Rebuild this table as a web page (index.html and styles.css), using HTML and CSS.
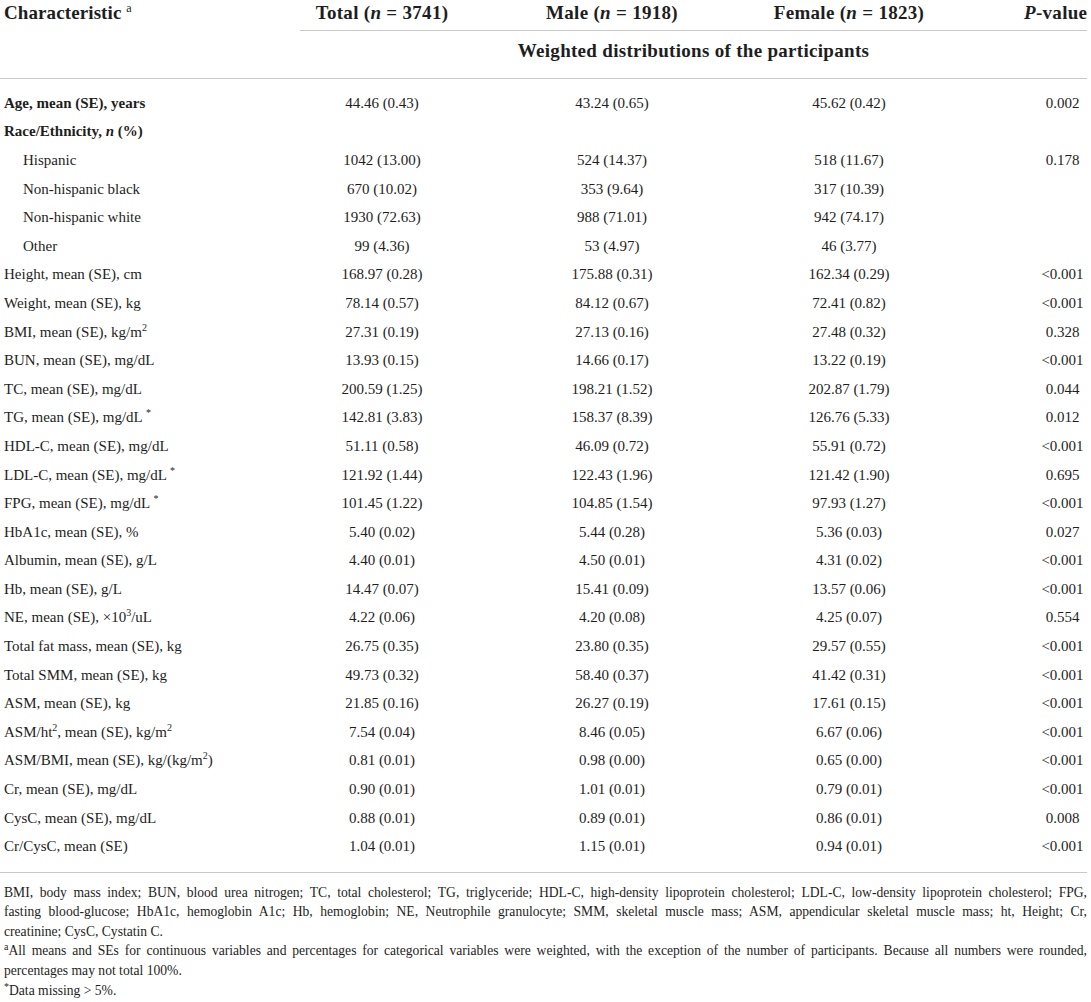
FILE: index.html
```html
<!DOCTYPE html>
<html lang="en">
<head>
<meta charset="utf-8">
<title>Table</title>
<link rel="stylesheet" href="styles.css">
</head>
<body>
<div class="table">
  <div class="row head">
    <div class="cell label">Characteristic <sup class="fn">a</sup></div>
    <div class="cell c-total">Total (<i>n</i> = 3741)</div>
    <div class="cell c-male">Male (<i>n</i> = 1918)</div>
    <div class="cell c-female">Female (<i>n</i> = 1823)</div>
    <div class="cell c-p head-p"><i>P</i>-value</div>
  </div>
  <div class="row subhead">
    <div class="cell"></div>
    <div class="cell span">Weighted distributions of the participants</div>
  </div>
  <div class="body">
    <div class="row"><div class="cell label strong">Age, mean (SE), years</div><div class="cell c-total">44.46 (0.43)</div><div class="cell c-male">43.24 (0.65)</div><div class="cell c-female">45.62 (0.42)</div><div class="cell c-p">0.002</div></div>
    <div class="row"><div class="cell label strong">Race/Ethnicity, <i>n</i> (%)</div><div class="cell c-total"></div><div class="cell c-male"></div><div class="cell c-female"></div><div class="cell c-p"></div></div>
    <div class="row"><div class="cell label sub">Hispanic</div><div class="cell c-total">1042 (13.00)</div><div class="cell c-male">524 (14.37)</div><div class="cell c-female">518 (11.67)</div><div class="cell c-p">0.178</div></div>
    <div class="row"><div class="cell label sub">Non-hispanic black</div><div class="cell c-total">670 (10.02)</div><div class="cell c-male">353 (9.64)</div><div class="cell c-female">317 (10.39)</div><div class="cell c-p"></div></div>
    <div class="row"><div class="cell label sub">Non-hispanic white</div><div class="cell c-total">1930 (72.63)</div><div class="cell c-male">988 (71.01)</div><div class="cell c-female">942 (74.17)</div><div class="cell c-p"></div></div>
    <div class="row"><div class="cell label sub">Other</div><div class="cell c-total">99 (4.36)</div><div class="cell c-male">53 (4.97)</div><div class="cell c-female">46 (3.77)</div><div class="cell c-p"></div></div>
    <div class="row"><div class="cell label">Height, mean (SE), cm</div><div class="cell c-total">168.97 (0.28)</div><div class="cell c-male">175.88 (0.31)</div><div class="cell c-female">162.34 (0.29)</div><div class="cell c-p">&lt;0.001</div></div>
    <div class="row"><div class="cell label">Weight, mean (SE), kg</div><div class="cell c-total">78.14 (0.57)</div><div class="cell c-male">84.12 (0.67)</div><div class="cell c-female">72.41 (0.82)</div><div class="cell c-p">&lt;0.001</div></div>
    <div class="row"><div class="cell label">BMI, mean (SE), kg/m<sup>2</sup></div><div class="cell c-total">27.31 (0.19)</div><div class="cell c-male">27.13 (0.16)</div><div class="cell c-female">27.48 (0.32)</div><div class="cell c-p">0.328</div></div>
    <div class="row"><div class="cell label">BUN, mean (SE), mg/dL</div><div class="cell c-total">13.93 (0.15)</div><div class="cell c-male">14.66 (0.17)</div><div class="cell c-female">13.22 (0.19)</div><div class="cell c-p">&lt;0.001</div></div>
    <div class="row"><div class="cell label">TC, mean (SE), mg/dL</div><div class="cell c-total">200.59 (1.25)</div><div class="cell c-male">198.21 (1.52)</div><div class="cell c-female">202.87 (1.79)</div><div class="cell c-p">0.044</div></div>
    <div class="row"><div class="cell label">TG, mean (SE), mg/dL <sup>*</sup></div><div class="cell c-total">142.81 (3.83)</div><div class="cell c-male">158.37 (8.39)</div><div class="cell c-female">126.76 (5.33)</div><div class="cell c-p">0.012</div></div>
    <div class="row"><div class="cell label">HDL-C, mean (SE), mg/dL</div><div class="cell c-total">51.11 (0.58)</div><div class="cell c-male">46.09 (0.72)</div><div class="cell c-female">55.91 (0.72)</div><div class="cell c-p">&lt;0.001</div></div>
    <div class="row"><div class="cell label">LDL-C, mean (SE), mg/dL <sup>*</sup></div><div class="cell c-total">121.92 (1.44)</div><div class="cell c-male">122.43 (1.96)</div><div class="cell c-female">121.42 (1.90)</div><div class="cell c-p">0.695</div></div>
    <div class="row"><div class="cell label">FPG, mean (SE), mg/dL <sup>*</sup></div><div class="cell c-total">101.45 (1.22)</div><div class="cell c-male">104.85 (1.54)</div><div class="cell c-female">97.93 (1.27)</div><div class="cell c-p">&lt;0.001</div></div>
    <div class="row"><div class="cell label">HbA1c, mean (SE), %</div><div class="cell c-total">5.40 (0.02)</div><div class="cell c-male">5.44 (0.28)</div><div class="cell c-female">5.36 (0.03)</div><div class="cell c-p">0.027</div></div>
    <div class="row"><div class="cell label">Albumin, mean (SE), g/L</div><div class="cell c-total">4.40 (0.01)</div><div class="cell c-male">4.50 (0.01)</div><div class="cell c-female">4.31 (0.02)</div><div class="cell c-p">&lt;0.001</div></div>
    <div class="row"><div class="cell label">Hb, mean (SE), g/L</div><div class="cell c-total">14.47 (0.07)</div><div class="cell c-male">15.41 (0.09)</div><div class="cell c-female">13.57 (0.06)</div><div class="cell c-p">&lt;0.001</div></div>
    <div class="row"><div class="cell label">NE, mean (SE), &times;10<sup>3</sup>/uL</div><div class="cell c-total">4.22 (0.06)</div><div class="cell c-male">4.20 (0.08)</div><div class="cell c-female">4.25 (0.07)</div><div class="cell c-p">0.554</div></div>
    <div class="row"><div class="cell label">Total fat mass, mean (SE), kg</div><div class="cell c-total">26.75 (0.35)</div><div class="cell c-male">23.80 (0.35)</div><div class="cell c-female">29.57 (0.55)</div><div class="cell c-p">&lt;0.001</div></div>
    <div class="row"><div class="cell label">Total SMM, mean (SE), kg</div><div class="cell c-total">49.73 (0.32)</div><div class="cell c-male">58.40 (0.37)</div><div class="cell c-female">41.42 (0.31)</div><div class="cell c-p">&lt;0.001</div></div>
    <div class="row"><div class="cell label">ASM, mean (SE), kg</div><div class="cell c-total">21.85 (0.16)</div><div class="cell c-male">26.27 (0.19)</div><div class="cell c-female">17.61 (0.15)</div><div class="cell c-p">&lt;0.001</div></div>
    <div class="row"><div class="cell label">ASM/ht<sup>2</sup>, mean (SE), kg/m<sup>2</sup></div><div class="cell c-total">7.54 (0.04)</div><div class="cell c-male">8.46 (0.05)</div><div class="cell c-female">6.67 (0.06)</div><div class="cell c-p">&lt;0.001</div></div>
    <div class="row"><div class="cell label">ASM/BMI, mean (SE), kg/(kg/m<sup>2</sup>)</div><div class="cell c-total">0.81 (0.01)</div><div class="cell c-male">0.98 (0.00)</div><div class="cell c-female">0.65 (0.00)</div><div class="cell c-p">&lt;0.001</div></div>
    <div class="row"><div class="cell label">Cr, mean (SE), mg/dL</div><div class="cell c-total">0.90 (0.01)</div><div class="cell c-male">1.01 (0.01)</div><div class="cell c-female">0.79 (0.01)</div><div class="cell c-p">&lt;0.001</div></div>
    <div class="row"><div class="cell label">CysC, mean (SE), mg/dL</div><div class="cell c-total">0.88 (0.01)</div><div class="cell c-male">0.89 (0.01)</div><div class="cell c-female">0.86 (0.01)</div><div class="cell c-p">0.008</div></div>
    <div class="row"><div class="cell label">Cr/CysC, mean (SE)</div><div class="cell c-total">1.04 (0.01)</div><div class="cell c-male">1.15 (0.01)</div><div class="cell c-female">0.94 (0.01)</div><div class="cell c-p">&lt;0.001</div></div>
  </div>
  <div class="notes">
    <p class="note"><span class="jline">BMI, body mass index; BUN, blood urea nitrogen; TC, total cholesterol; TG, triglyceride; HDL-C, high-density lipoprotein cholesterol; LDL-C, low-density lipoprotein cholesterol; FPG,</span><span class="jline">fasting blood-glucose; HbA1c, hemoglobin A1c; Hb, hemoglobin; NE, Neutrophile granulocyte; SMM, skeletal muscle mass; ASM, appendicular skeletal muscle mass; ht, Height; Cr,</span><span class="line">creatinine; CysC, Cystatin C.</span></p>
    <p class="note"><span class="jline"><sup>a</sup>All means and SEs for continuous variables and percentages for categorical variables were weighted, with the exception of the number of participants. Because all numbers were rounded,</span><span class="line">percentages may not total 100%.</span></p>
    <p class="note"><span class="line"><sup>*</sup>Data missing &gt; 5%.</span></p>
  </div>
</div>
</body>
</html>
```

FILE: styles.css
```css
html, body {
  margin: 0;
  padding: 0;
  background: #ffffff;
}

body {
  font-family: "Liberation Serif", "Times New Roman", serif;
  color: #1e1e1e;
}

.table {
  width: 1087px;
}

.row {
  display: grid;
  grid-template-columns: 300px 164px 296px 178px 149px;
  align-items: center;
  height: 28.6px;
  font-size: 15px;
  line-height: 18px;
}

.cell {
  white-space: nowrap;
  text-align: center;
}

.cell.label {
  text-align: left;
  padding-left: 4px;
}

.cell.label.sub {
  padding-left: 23px;
}

.strong {
  font-weight: bold;
}

.c-p {
  padding-left: 100px;
}

.head {
  height: 30px;
  font-size: 19px;
  letter-spacing: 0.3px;
  font-weight: bold;
  align-items: start;
  padding-top: 4px;
  box-sizing: border-box;
}

.head .label {
  padding-left: 4px;
  letter-spacing: 0.1px;
}

.head .c-p.head-p {
  padding-left: 86px;
}

.fn {
  font-weight: normal;
  font-size: 12px;
  vertical-align: 7px;
  line-height: 0;
}

.subhead {
  height: auto;
  font-size: 19px;
  letter-spacing: 0.3px;
  font-weight: bold;
  border-bottom: 1px solid #c9c9c9;
}

.subhead .span {
  grid-column: 2 / -1;
  border-top: 1px solid #c9c9c9;
  padding-top: 11px;
  padding-bottom: 18px;
}

.body {
  padding-top: 9.5px;
  padding-bottom: 11px;
  border-bottom: 1px solid #c9c9c9;
}

sup {
  font-size: 10px;
  line-height: 0;
  vertical-align: 6px;
}

.notes {
  padding-top: 10px;
  padding-left: 4px;
  font-size: 13.6px;
  line-height: 19.6px;
}

.note {
  margin: 0;
}

.note sup {
  font-size: 10px;
  vertical-align: 5px;
}

.jline {
  display: block;
  white-space: nowrap;
  text-align: justify;
  text-align-last: justify;
}

.line {
  display: block;
  white-space: nowrap;
}
```
